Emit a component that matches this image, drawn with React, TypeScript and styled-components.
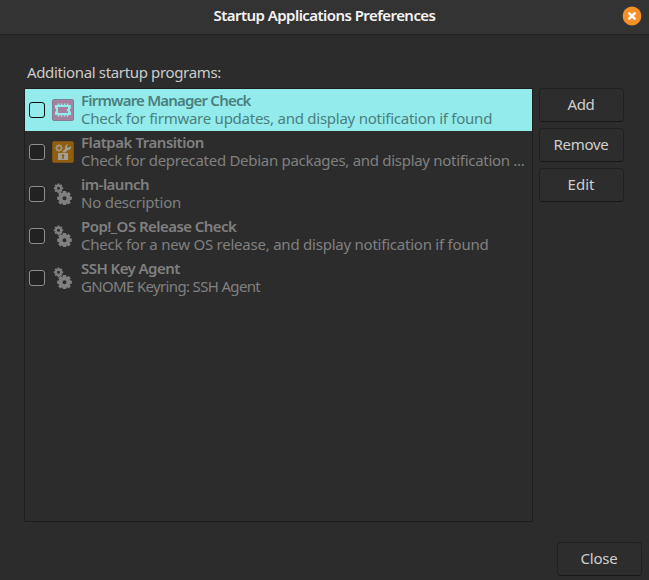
import React, { useState } from "react";
import styled, { createGlobalStyle } from "styled-components";

const GlobalStyle = createGlobalStyle`
  * { box-sizing: border-box; }
  body { margin: 0; background: #2c2c2c; }
`;

const Dialog = styled.div`
  display: flex;
  flex-direction: column;
  height: 580px;
  background: #2c2c2c;
  color: #cbcbcb;
  font: 400 15px/18px "Noto Sans", "Open Sans", sans-serif;
  white-space: nowrap;
`;

const HeaderBar = styled.header`
  display: grid;
  grid-template-columns: 1fr auto 1fr;
  align-items: center;
  height: 35px;
  padding: 0 7px 3px 7px;
  background: #333333;
  border-bottom: 1px solid #212121;
`;

const Title = styled.h1<{ $spacing: number }>`
  grid-column: 2;
  margin: 0;
  padding-bottom: 2px;
  font-size: 15px;
  line-height: 18px;
  font-weight: 600;
  color: #f3f3f3;
  letter-spacing: ${(p) => p.$spacing}px;
`;

const CloseButton = styled.button`
  justify-self: end;
  display: flex;
  padding: 0;
  border: 0;
  background: none;
`;

const Body = styled.main`
  flex: 1;
  display: flex;
  flex-direction: column;
  padding: 28px 7px 4px 24px;
`;

const Caption = styled.div<{ $spacing: number }>`
  height: 25px;
  padding-left: 3px;
  letter-spacing: ${(p) => p.$spacing}px;
`;

const Columns = styled.div`
  display: flex;
  gap: 6px;
`;

const ProgramList = styled.ul`
  width: 509px;
  height: 434px;
  margin: 0;
  padding: 0;
  list-style: none;
  border: 1px solid #1d1d1d;
`;

const ProgramRow = styled.li<{ $selected: boolean }>`
  display: flex;
  align-items: center;
  height: 42px;
  padding-left: 4px;
  background: ${(p) => (p.$selected ? "#94ebeb" : "transparent")};
  color: ${(p) => (p.$selected ? "#4b7f7f" : "#808080")};
`;

const CheckBox = styled.span<{ $selected: boolean }>`
  width: 16px;
  height: 16px;
  border: 1px solid ${(p) => (p.$selected ? "#0b1111" : "#8e8e8e")};
  border-radius: 3px;
  background: ${(p) => (p.$selected ? "transparent" : "#222222")};
`;

const IconSlot = styled.span`
  display: flex;
  margin: 0 7px;
`;

const Labels = styled.div`
  display: flex;
  flex-direction: column;
  padding-bottom: 2px;
`;

const Name = styled.span<{ $spacing: number }>`
  font-weight: 600;
  letter-spacing: ${(p) => p.$spacing}px;
`;

const Description = styled.span<{ $spacing: number }>`
  letter-spacing: ${(p) => p.$spacing}px;
`;

const ButtonColumn = styled.div`
  display: flex;
  flex-direction: column;
  gap: 6px;
`;

const Button = styled.button<{ $spacing: number }>`
  width: 85px;
  height: 34px;
  padding: 0 1px 2px 0;
  border: 1px solid #202020;
  border-bottom-color: #171717;
  border-radius: 4px;
  background: #2d2d2d;
  color: #cfcfcf;
  font: inherit;
  letter-spacing: ${(p) => p.$spacing}px;
`;

const Footer = styled.footer`
  display: flex;
  justify-content: flex-end;
  margin-top: auto;
`;

function gearPath(cx: number, cy: number, outer: number, inner: number, hole: number) {
  const points: string[] = [];
  for (let i = 0; i < 8; i++) {
    const corners: [number, number][] = [[-0.3, inner], [-0.22, outer], [0.22, outer], [0.3, inner]];
    corners.forEach(([offset, radius]) => {
      const angle = (i * Math.PI) / 4 + offset;
      points.push(`${(cx + radius * Math.sin(angle)).toFixed(2)} ${(cy - radius * Math.cos(angle)).toFixed(2)}`);
    });
  }
  return `M${points.join("L")}Z M${cx - hole} ${cy}a${hole} ${hole} 0 1 0 ${hole * 2} 0a${hole} ${hole} 0 1 0 ${-hole * 2} 0Z`;
}

const FirmwareIcon = () => (
  <svg width="22" height="22" viewBox="0 0 22 22">
    <rect x=".5" y=".5" width="21" height="21" rx="1.5" fill="#a6809f" stroke="#837f93" />
    <path
      fill="#94ebeb"
      fillRule="evenodd"
      d="M3 6H19V9.5H18V12.5H19V16H3V12.5H4V9.5H3ZM6 8V14H16V12.5L14.5 11L16 9.5V8Z"
    />
    <path stroke="#94ebeb" strokeWidth="1.5" d="M6.5 4.5V6M9.5 4.5V6M12.5 4.5V6M15.5 4.5V6M6.5 16V17.5M9.5 16V17.5M12.5 16V17.5M15.5 16V17.5" />
  </svg>
);

const PackageIcon = () => (
  <svg width="22" height="22" viewBox="0 0 22 22">
    <rect x=".5" y=".5" width="21" height="21" rx="1.5" fill="#91600f" stroke="#795012" />
    <path fill="#a3a09b" fillRule="evenodd" d={gearPath(7, 7, 3.7, 2.7, 1.7)} />
    <path
      fill="#a3a09b"
      d="M16.3 3.1l-1.4 2 .7 1.5 1.6.2 1.6-1.9c.7 2.3-.6 4.2-3 4.1l-2.9 2.5h-2.2v-1.2l2.5-2.5c-.5-2.6.8-4.4 3.1-4.7Z"
    />
    <path
      fill="#a3a09b"
      fillRule="evenodd"
      d="M6 12h10v7H6Zm5 1.3a1.4 1.4 0 0 0-.8 2.5V18h1.6v-2.2a1.4 1.4 0 0 0-.8-2.5Z"
    />
  </svg>
);

const GearsIcon = () => (
  <svg width="22" height="22" viewBox="0 0 22 22">
    <path fill="#808080" fillRule="evenodd" d={gearPath(6.5, 5.2, 4.8, 3.6, 1.5)} />
    <path fill="#808080" fillRule="evenodd" d={gearPath(12.5, 15.2, 7.5, 5.9, 2)} />
  </svg>
);

const programs = [
  { name: "Firmware Manager Check", nameSpacing: -0.8, description: "Check for firmware updates, and display notification if found", spacing: -0.25, Icon: FirmwareIcon },
  { name: "Flatpak Transition", nameSpacing: -0.46, description: "Check for deprecated Debian packages, and display notification ...", spacing: -0.29, Icon: PackageIcon },
  { name: "im-launch", nameSpacing: -0.52, description: "No description", spacing: -0.24, Icon: GearsIcon },
  { name: "Pop!_OS Release Check", nameSpacing: -0.55, description: "Check for a new OS release, and display notification if found", spacing: -0.23, Icon: GearsIcon },
  { name: "SSH Key Agent", nameSpacing: -0.56, description: "GNOME Keyring: SSH Agent", spacing: -0.66, Icon: GearsIcon },
];

export default function App() {
  const [selected, setSelected] = useState(0);
  return (
    <>
      <GlobalStyle />
      <Dialog>
        <HeaderBar>
          <Title $spacing={-0.55}>Startup Applications Preferences</Title>
          <CloseButton aria-label="Close window">
            <svg width="20" height="20" viewBox="0 0 20 20">
              <circle cx="10" cy="10" r="9.4" fill="#f58f28" />
              <path d="M6.6 6.6l6.8 6.8M13.4 6.6l-6.8 6.8" stroke="#fff" strokeWidth="2.4" />
            </svg>
          </CloseButton>
        </HeaderBar>
        <Body>
          <Caption $spacing={-0.35}>Additional startup programs:</Caption>
          <Columns>
            <ProgramList>
              {programs.map(({ name, nameSpacing, description, spacing, Icon }, index) => (
                <ProgramRow key={name} $selected={index === selected} onClick={() => setSelected(index)}>
                  <CheckBox $selected={index === selected} />
                  <IconSlot>
                    <Icon />
                  </IconSlot>
                  <Labels>
                    <Name $spacing={nameSpacing}>{name}</Name>
                    <Description $spacing={spacing}>{description}</Description>
                  </Labels>
                </ProgramRow>
              ))}
            </ProgramList>
            <ButtonColumn>
              <Button $spacing={-0.35}>Add</Button>
              <Button $spacing={-0.28}>Remove</Button>
              <Button $spacing={0}>Edit</Button>
            </ButtonColumn>
          </Columns>
          <Footer>
            <Button $spacing={-0.22}>Close</Button>
          </Footer>
        </Body>
      </Dialog>
    </>
  );
}
